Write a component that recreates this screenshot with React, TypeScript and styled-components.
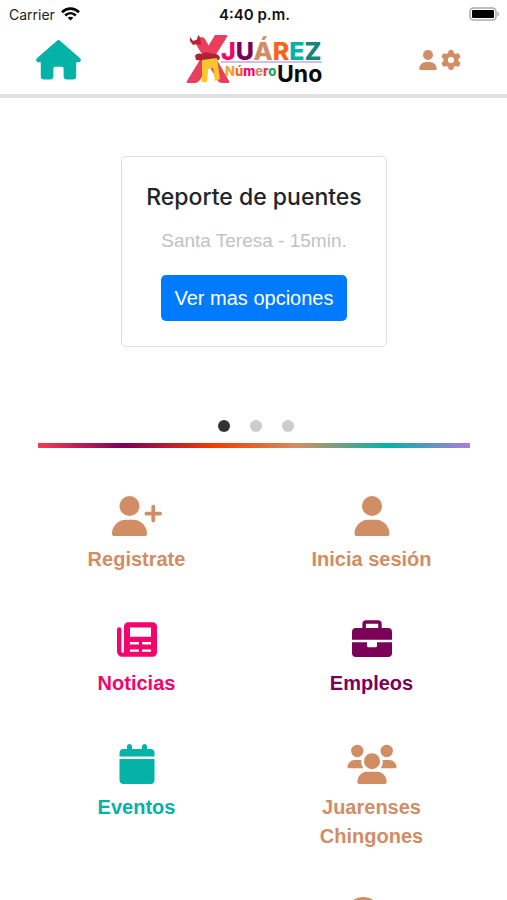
import React from "react";
import styled, { createGlobalStyle } from "styled-components";
import { FaCalendar, FaComments, FaGear, FaUser, FaUserPlus } from "react-icons/fa6";

const colors = {
  copper: "#d18d64",
  teal: "#05b2a7",
  pink: "#f4056b",
  plum: "#7b0058",
  blue: "#007bff",
};

const GlobalStyle = createGlobalStyle`
  *, *::before, *::after { box-sizing: border-box; }
  body {
    margin: 0;
    background: #fff;
    font-family: "Liberation Sans", Arial, sans-serif;
  }
`;

const Screen = styled.div`
  display: flex;
  flex-direction: column;
  height: 100vh;
`;

const StatusBar = styled.div`
  display: grid;
  grid-template-columns: 1fr auto 1fr;
  align-items: center;
  height: 28px;
  padding: 0 7px 0 9px;
  font-family: Inter, sans-serif;
  font-size: 14px;
  color: #222;
`;

const Carrier = styled.span`
  display: flex;
  align-items: center;
  gap: 6px;
`;

const Clock = styled.time`
  font-size: 15px;
  font-weight: 600;
  color: #111;
`;

const BatterySlot = styled.span`
  display: flex;
  justify-content: flex-end;
`;

const Header = styled.header`
  display: grid;
  grid-template-columns: 1fr auto 1fr;
  align-items: center;
  height: 70px;
  padding: 0 36px 2px;
  border-bottom: 4px solid #e1e1e1;
`;

const HeaderLink = styled.a<{ $color: string; $end?: boolean }>`
  display: flex;
  gap: 3px;
  justify-self: ${(p) => (p.$end ? "end" : "start")};
  padding-right: ${(p) => (p.$end ? 10 : 0)}px;
  color: ${(p) => p.$color};
  font-size: 20px;
`;

const Content = styled.main`
  flex: 1;
  min-height: 0;
  overflow-y: auto;
  scrollbar-width: none;
  padding: 58px 37px 0 38px;
`;

const Card = styled.section`
  display: flex;
  flex-direction: column;
  align-items: center;
  width: fit-content;
  margin: 0 auto;
  padding: 25px 24px;
  border: 1px solid #dfdfdf;
  border-radius: 5px;
`;

const CardTitle = styled.h2`
  margin: 0;
  font: 500 23px/30px Inter, sans-serif;
  color: #212529;
`;

const CardText = styled.p`
  margin: 14px 0 19px;
  font-size: 19px;
  line-height: 30px;
  color: #c2c2c2;
`;

const PrimaryButton = styled.button`
  height: 46px;
  padding: 0 14px;
  border: 0;
  border-radius: 5px;
  background: ${colors.blue};
  color: #fff;
  font: 20px/30px "Liberation Sans", Arial, sans-serif;
`;

const Dots = styled.div`
  display: flex;
  justify-content: center;
  gap: 20px;
  margin: 73px 0 11px;
  padding-left: 4px;
`;

const Dot = styled.button<{ $active?: boolean }>`
  width: 12px;
  height: 12px;
  padding: 0;
  border: 0;
  border-radius: 50%;
  background: ${(p) => (p.$active ? "#333" : "#ccc")};
`;

const Rainbow = styled.hr`
  height: 5px;
  margin: 0;
  border: 0;
  background: linear-gradient(
    to right,
    #f63c55,
    #7b0058 20%,
    #f43f00 41%,
    #d18d64 60%,
    #05b2a7 81%,
    #b07cd8
  );
`;

const Menu = styled.nav`
  display: grid;
  grid-template-columns: 1fr 1fr;
  row-gap: 46px;
  padding: 48px 0 40px;
  margin: 0 -19px;
`;

const MenuItem = styled.a<{ $color: string; $column?: number }>`
  display: flex;
  flex-direction: column;
  align-items: center;
  gap: 9px;
  grid-column: ${(p) => p.$column ?? "auto"};
  color: ${(p) => p.$color};
  text-decoration: none;

  svg {
    width: 50px;
    height: 40px;
  }
`;

const MenuLabel = styled.span`
  max-width: 130px;
  text-align: center;
  font-size: 20px;
  font-weight: 700;
  line-height: 29px;
`;

const WifiIcon = () => (
  <svg width="19" height="14" viewBox="0 0 19 14" fill="none" stroke="#000" strokeWidth="2.6">
    <path d="M1 5.2C6 .4 13 .4 18 5.2" />
    <path d="M4.2 8.5c3.1-3 7.5-3 10.6 0" />
    <path d="M9.5 13.5 6.7 10.7c1.6-1.4 4-1.4 5.6 0z" fill="#000" stroke="none" />
  </svg>
);

const BatteryIcon = () => (
  <svg width="31" height="14" viewBox="0 0 31 14">
    <rect x="1" y="1" width="26" height="12" rx="3.5" fill="#fff" stroke="#aaa" strokeWidth="1.5" />
    <rect x="3" y="3" width="22" height="8" rx="1" fill="#000" />
    <path d="M28.5 4.5c2 .8 2 4.2 0 5z" fill="#aaa" />
  </svg>
);

const HomeIcon = () => (
  <svg width="45" height="40" viewBox="0 0 45 40" fill="currentColor">
    <path d="M20.7.9a2.600 2.600 0 0 1 3.600 0L43.800 18a2.300 2.300 0 0 1-1.500 4.200H40.200V36.200a3.200 3.200 0 0 1-3.200 3.200H30.800a3.200 3.200 0 0 1-3.200-3.200V28.500a1.800 1.800 0 0 0-1.800-1.800H19.200a1.800 1.800 0 0 0-1.800 1.800V36.200a3.200 3.200 0 0 1-3.200 3.200H8a3.200 3.200 0 0 1-3.200-3.200V22.200H2.700A2.300 2.300 0 0 1 1.200 18z" />
  </svg>
);

const NewspaperIcon = () => (
  <svg width="40" height="40" viewBox="0 0 40 40" fill="currentColor">
    <path
      fillRule="evenodd"
      d="M0 9.500A2.200 2.200 0 0 1 4.400 9.500V31.500a1.300 1.300 0 0 0 2.600 0V6.500A4.200 4.200 0 0 1 11.200 2.300H35.800A4.200 4.200 0 0 1 40 6.500V32.500A4.200 4.200 0 0 1 35.800 36.700H5.200A5.200 5.200 0 0 1 0 31.500zM13 7.500V16.700H34V7.500zM13 22V24.400H21.800V22zM25 22V24.400H34V22zM13 29.400V31.800H21.800V29.400zM25 29.400V31.800H34V29.400z"
    />
  </svg>
);

const BriefcaseIcon = () => (
  <svg width="40" height="40" viewBox="0 0 40 40" fill="currentColor">
    <path
      fillRule="evenodd"
      d="M10.400 8V4A3.700 3.700 0 0 1 14.100.3H26A3.700 3.700 0 0 1 29.700 4V8H36a4 4 0 0 1 4 4v7.700H0V12a4 4 0 0 1 4-4zM13.900 8H26.200V3.800H13.900z"
    />
    <path d="M0 22.300h15v3.400a1.500 1.500 0 0 0 1.500 1.500h7a1.500 1.500 0 0 0 1.500-1.500v-3.400h15V33a4 4 0 0 1-4 4H4a4 4 0 0 1-4-4z" />
  </svg>
);

const UsersIcon = () => (
  <svg width="50" height="40" viewBox="0 0 50 40" fill="currentColor">
    <circle cx="10.300" cy="7" r="6.200" />
    <circle cx="39.700" cy="7" r="6.200" />
    <circle cx="25" cy="17.200" r="8" />
    <path d="M8 16h6.500c-.8 3 .2 6 2 8.300H2a1.500 1.500 0 0 1-1.500-1.600C.8 19 4 16 8 16z" />
    <path d="M42 16h-6.500c.8 3-.2 6-2 8.300H48a1.500 1.500 0 0 0 1.500-1.600C49.200 19 46 16 42 16z" />
    <path d="M20 27.700h10c5.500 0 9.600 4.500 9.700 10.300 0 1.200-.8 2-2 2H12.300c-1.200 0-2-.8-2-2 .1-5.800 4.200-10.300 9.700-10.300z" />
  </svg>
);

const Logo = () => (
  <svg width="142" height="58" viewBox="-3 -3 142 58" role="img" aria-label="Juárez Número Uno">
    <path d="M29 1h11q2 0 1 2L14 46q-2 3-5 3H1q-1 0 0-2z" fill="#ea3f5c" />
    <path d="M8 7l7-4q3 0 4 2l24 42q1 2-1 2h-6q-3 0-4-2z" fill="#ea3f5c" />
    <path d="M4 3l3 4 4-1 1-5 2 2 1 8-4-1-4 1-3-4z" fill="#b92236" />
    <path d="M9 22c1-3 5-3 7-2 2-2 7-2 10 0 3-1 6 0 8 3l-1 3-12 1-11-1z" fill="#b01f35" />
    <path d="M16 26l15-2 3 21-5 2-2-13-5 1-1 13h-5z" fill="#fbc52d" />
    <path d="M35 28h101" stroke="#a57fcf" strokeWidth="1" />
    <g fontFamily="Inter, sans-serif">
      <text x="35" y="26" fontSize="25" fontWeight="800">
        <tspan fill="#f4056b">J</tspan>
        <tspan fill="#7b0058">U</tspan>
        <tspan fill="#d18d64">Á</tspan>
        <tspan fill="#f4661b">R</tspan>
        <tspan fill="#05b2a7">E</tspan>
        <tspan fill="#17847e">Z</tspan>
      </text>
      <text x="39" y="42" fontSize="13" fontWeight="800">
        <tspan fill="#f9a12b">N</tspan>
        <tspan fill="#f4661b">ú</tspan>
        <tspan fill="#f4056b">m</tspan>
        <tspan fill="#d18d64">e</tspan>
        <tspan fill="#f4305b">r</tspan>
        <tspan fill="#19a866">o</tspan>
      </text>
      <text x="91" y="48" fontSize="23" fontWeight="700" fill="#0a0a0a">
        Uno
      </text>
    </g>
  </svg>
);

const menuItems = [
  { label: "Registrate", color: colors.copper, icon: <FaUserPlus /> },
  { label: "Inicia sesión", color: colors.copper, icon: <FaUser /> },
  { label: "Noticias", color: colors.pink, icon: <NewspaperIcon /> },
  { label: "Empleos", color: colors.plum, icon: <BriefcaseIcon /> },
  { label: "Eventos", color: colors.teal, icon: <FaCalendar /> },
  { label: "Juarenses Chingones", color: colors.copper, icon: <UsersIcon /> },
];

export default function App() {
  return (
    <Screen>
      <GlobalStyle />
      <StatusBar>
        <Carrier>
          Carrier <WifiIcon />
        </Carrier>
        <Clock>4:40 p.m.</Clock>
        <BatterySlot>
          <BatteryIcon />
        </BatterySlot>
      </StatusBar>
      <Header>
        <HeaderLink href="#" aria-label="Home" $color={colors.teal}>
          <HomeIcon />
        </HeaderLink>
        <Logo />
        <HeaderLink href="#" aria-label="Account" $color={colors.copper} $end>
          <FaUser />
          <FaGear />
        </HeaderLink>
      </Header>
      <Content>
        <Card>
          <CardTitle>Reporte de puentes</CardTitle>
          <CardText>Santa Teresa - 15min.</CardText>
          <PrimaryButton type="button">Ver mas opciones</PrimaryButton>
        </Card>
        <Dots>
          <Dot type="button" aria-label="1" $active />
          <Dot type="button" aria-label="2" />
          <Dot type="button" aria-label="3" />
        </Dots>
        <Rainbow />
        <Menu>
          {menuItems.map((item) => (
            <MenuItem key={item.label} href="#" $color={item.color}>
              {item.icon}
              <MenuLabel>{item.label}</MenuLabel>
            </MenuItem>
          ))}
          <MenuItem href="#" $color={colors.copper} $column={2}>
            <FaComments />
          </MenuItem>
        </Menu>
      </Content>
    </Screen>
  );
}
